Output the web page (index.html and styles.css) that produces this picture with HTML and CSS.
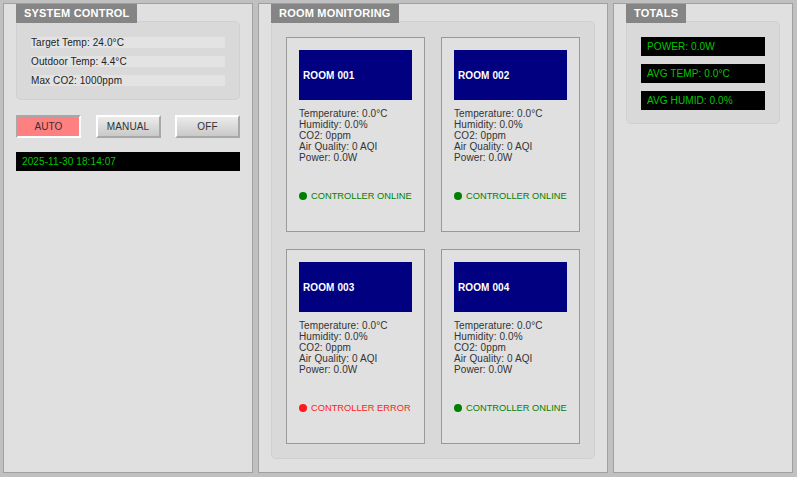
FILE: index.html
```html
<!DOCTYPE html>
<html>
<head>
    <link rel="stylesheet" href="styles.css">
</head>
<body>
    <div class="panel panel-control">
        <div class="panel-title">SYSTEM CONTROL</div>
        <div class="panel-box settings">
            <div class="setting-row">Target Temp: 24.0°C</div>
            <div class="setting-row">Outdoor Temp: 4.4°C</div>
            <div class="setting-row">Max CO2: 1000ppm</div>
        </div>

        <div class="mode-buttons">
            <button class="mode-btn active">AUTO</button>
            <button class="mode-btn">MANUAL</button>
            <button class="mode-btn">OFF</button>
        </div>

        <div class="lcd clock" id="clock">2025-11-30 18:14:07</div>
    </div>

    <div class="panel panel-rooms">
        <div class="panel-title">ROOM MONITORING</div>
        <div class="panel-box room-grid" id="room-grid"></div>
    </div>

    <div class="panel panel-totals">
        <div class="panel-title">TOTALS</div>
        <div class="panel-box totals">
            <div class="lcd">POWER: 0.0W</div>
            <div class="lcd">AVG TEMP: 0.0°C</div>
            <div class="lcd">AVG HUMID: 0.0%</div>
        </div>
    </div>

    <script>
        const rooms = [
            { id: '001', online: true },
            { id: '002', online: true },
            { id: '003', online: false },
            { id: '004', online: true }
        ];

        const grid = document.getElementById('room-grid');

        rooms.forEach(room => {
            const card = document.createElement('div');
            card.className = 'room-card';
            const statusClass = room.online ? 'online' : 'error';
            const statusText = room.online ? 'CONTROLLER ONLINE' : 'CONTROLLER ERROR';

            card.innerHTML = `
                <div class="room-header">ROOM ${room.id}</div>
                <div class="room-stats">
                    <div>Temperature: 0.0°C</div>
                    <div>Humidity: 0.0%</div>
                    <div>CO2: 0ppm</div>
                    <div>Air Quality: 0 AQI</div>
                    <div>Power: 0.0W</div>
                </div>
                <div class="room-status ${statusClass}">
                    <span class="status-dot"></span>${statusText}
                </div>
            `;
            grid.appendChild(card);
        });
    </script>
</body>
</html>
```

FILE: styles.css
```css
* {
    box-sizing: border-box;
}

html, body {
    height: 100%;
}

body {
    margin: 0;
    padding: 3px 4px 4px 3px;
    background: #c0c0c0;
    font-family: "Liberation Sans", Arial, sans-serif;
    font-size: 10px;
    letter-spacing: 0.1px;
    color: #333;
    display: flex;
    gap: 5px;
}

.panel {
    background: #e0e0e0;
    border: 1px solid #a0a0a0;
    padding: 0 12px;
    display: flex;
    flex-direction: column;
    align-items: flex-start;
}

.panel-control {
    width: 250px;
}

.panel-rooms {
    width: 350px;
}

.panel-totals {
    flex: 1;
}

.panel-title {
    position: relative;
    background: #858585;
    color: #fff;
    font-size: 11px;
    font-weight: bold;
    letter-spacing: 0.2px;
    height: 19px;
    line-height: 19px;
    padding: 0 8px;
}

.panel-box {
    align-self: stretch;
    margin-top: -2px;
    background: #d9d9d9;
    border: 1px solid #d0d0d0;
    border-radius: 5px;
    padding: 15px 14px 13px;
}

/* system control */
.settings {
    display: flex;
    flex-direction: column;
    gap: 8px;
}

.setting-row {
    background: #e3e3e3;
    height: 11px;
    line-height: 11px;
    color: #222;
}

.mode-buttons {
    align-self: stretch;
    display: flex;
    justify-content: space-between;
    margin-top: 15px;
}

.mode-btn {
    width: 65px;
    height: 23px;
    font-family: "Liberation Sans", Arial, sans-serif;
    font-size: 10px;
    letter-spacing: 0.1px;
    color: #333;
    background: linear-gradient(#ebebeb, #c9c9c9);
    border: 2px solid;
    border-color: #fff #a8a8a8 #a8a8a8 #fff;
    padding: 0;
    cursor: pointer;
}

.mode-btn.active {
    background: #ff8080;
    border-color: #a8a8a8 #fff #fff #a8a8a8;
}

.lcd {
    background: #000;
    color: #00c800;
    height: 19px;
    line-height: 19px;
    padding: 0 6px;
}

.clock {
    align-self: stretch;
    margin-top: 14px;
}

/* room monitoring */
.room-grid {
    padding: 15px 14px 14px;
    display: grid;
    grid-template-columns: repeat(2, 139px);
    grid-auto-rows: 195px;
    column-gap: 16px;
    row-gap: 17px;
}

.room-card {
    background: #e0e0e0;
    border: 1px solid #999;
    padding: 12px;
}

.room-header {
    background: #000080;
    color: #fff;
    font-weight: bold;
    height: 50px;
    display: flex;
    align-items: center;
    padding-left: 4px;
}

.room-stats {
    margin-top: 8px;
    line-height: 11px;
}

.room-status {
    margin-top: 27px;
    height: 11px;
    display: flex;
    align-items: center;
    gap: 4px;
    font-size: 9.3px;
    letter-spacing: 0;
    white-space: nowrap;
}

.status-dot {
    flex: none;
    width: 8px;
    height: 8px;
    border-radius: 50%;
    background: currentColor;
}

.online {
    color: #008000;
}

.error {
    color: #ff1a1a;
}

/* totals */
.totals {
    display: flex;
    flex-direction: column;
    gap: 8px;
}
```
